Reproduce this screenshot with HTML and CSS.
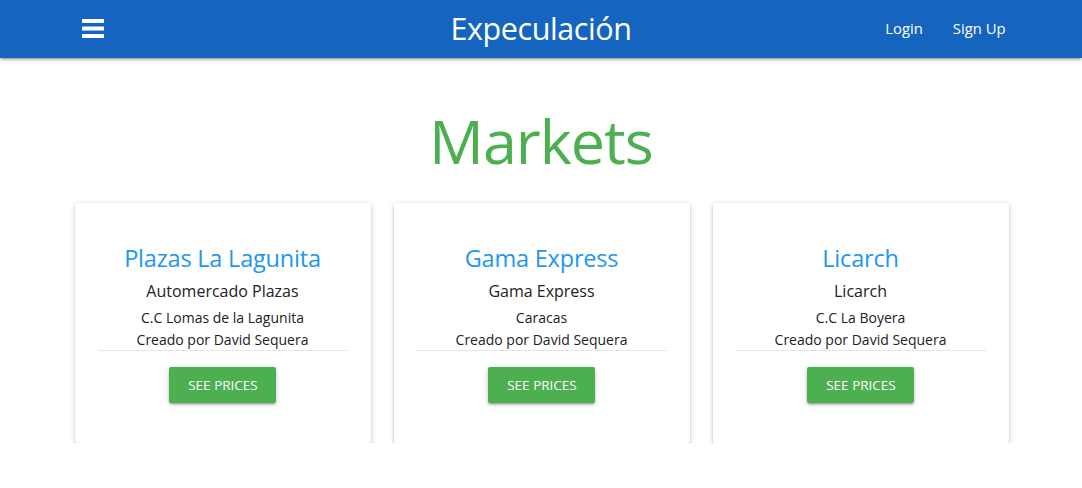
FILE: index.html
```html
<!DOCTYPE html>
<html lang="es">
<head>
<meta charset="utf-8">
<title>Expeculación</title>
<link rel="stylesheet" href="styles.css">
</head>
<body>
<nav class="navbar">
  <div class="nav-left">
    <svg class="menu-icon" width="22" height="19" viewBox="0 0 22 19" aria-hidden="true">
      <rect x="0" y="0" width="22" height="4" rx="0.6" fill="#fff"/>
      <rect x="0" y="7.5" width="22" height="4" rx="0.6" fill="#fff"/>
      <rect x="0" y="15" width="22" height="4" rx="0.6" fill="#fff"/>
    </svg>
  </div>
  <a class="brand" href="#">Expeculación</a>
  <ul class="nav-links">
    <li><a href="#">Login</a></li>
    <li><a href="#">Sign Up</a></li>
  </ul>
</nav>
<main class="page">
  <h1 class="page-title">Markets</h1>
  <div class="cards">
    <div class="card">
      <h2 class="card-title">Plazas La Lagunita</h2>
      <p class="card-sub">Automercado Plazas</p>
      <p class="card-line">C.C Lomas de la Lagunita</p>
      <p class="card-line">Creado por David Sequera</p>
      <div class="card-divider"></div>
      <a class="btn" href="#">See prices</a>
    </div>
    <div class="card">
      <h2 class="card-title">Gama Express</h2>
      <p class="card-sub">Gama Express</p>
      <p class="card-line">Caracas</p>
      <p class="card-line">Creado por David Sequera</p>
      <div class="card-divider"></div>
      <a class="btn" href="#">See prices</a>
    </div>
    <div class="card">
      <h2 class="card-title">Licarch</h2>
      <p class="card-sub">Licarch</p>
      <p class="card-line">C.C La Boyera</p>
      <p class="card-line">Creado por David Sequera</p>
      <div class="card-divider"></div>
      <a class="btn" href="#">See prices</a>
    </div>
  </div>
</main>
</body>
</html>
```
FILE: styles.css
```css
* { box-sizing: border-box; }
html, body { margin: 0; padding: 0; }
body {
  font-family: "Open Sans", "Noto Sans", "Liberation Sans", sans-serif;
  background: #fff;
  color: rgba(0,0,0,0.87);
}
a { text-decoration: none; color: inherit; }

.navbar {
  height: 58px;
  background: #1565c0;
  display: grid;
  grid-template-columns: 1fr auto 1fr;
  align-items: center;
  box-shadow: 0 2px 2px 0 rgba(0,0,0,0.14), 0 3px 1px -2px rgba(0,0,0,0.12), 0 1px 5px 0 rgba(0,0,0,0.2);
  position: relative;
  z-index: 1;
}
.nav-left {
  padding-left: 82px;
  display: flex;
  align-items: center;
}
.menu-icon { display: block; margin-top: -1px; }
.brand {
  color: #fff;
  font-size: 30.5px;
  line-height: 1;
  letter-spacing: -0.4px;
  margin-top: -2px;
}
.nav-links {
  list-style: none;
  margin: 0;
  padding: 0 62px 0 0;
  display: flex;
  justify-content: flex-end;
}
.nav-links a {
  display: block;
  color: #fff;
  font-size: 14.8px;
  padding: 0 14.5px;
  margin-top: -3px;
}
.nav-links li:first-child a { padding-right: 15.5px; }

.page { padding-top: 43px; }
.page-title {
  margin: 0;
  text-align: center;
  font-weight: 400;
  font-size: 61px;
  line-height: 80px;
  color: #4caf50;
  letter-spacing: -1px;
}
.cards {
  display: grid;
  grid-template-columns: repeat(3, 296px);
  gap: 23px;
  justify-content: center;
  margin-top: 22px;
  padding-left: 1px;
}
.card {
  height: 240px;
  background: #fff;
  border-radius: 2px;
  box-shadow: 0 2px 2px 0 rgba(0,0,0,0.14), 0 3px 1px -2px rgba(0,0,0,0.12), 0 1px 5px 0 rgba(0,0,0,0.2);
  display: flex;
  flex-direction: column;
  align-items: center;
  padding: 38px 23px 0;
  text-align: center;
}
.card-title {
  margin: 0;
  font-weight: 400;
  font-size: 23.5px;
  line-height: 34px;
  color: #2196f3;
  letter-spacing: -0.2px;
}
.card-sub {
  margin: 0;
  font-size: 16px;
  line-height: 32px;
  color: #222;
}
.card-line {
  margin: 0;
  font-size: 14px;
  line-height: 22px;
  color: #222;
}
.card-divider {
  align-self: stretch;
  height: 1px;
  background: #e6e6e6;
  margin-top: -1px;
}
.btn {
  margin-top: 16px;
  height: 36px;
  line-height: 36px;
  padding: 0 18px 0 19px;
  background: #4caf50;
  color: #fff;
  font-size: 13.5px;
  text-transform: uppercase;
  border-radius: 2px;
  letter-spacing: 0;
  box-shadow: 0 2px 2px 0 rgba(0,0,0,0.14), 0 3px 1px -2px rgba(0,0,0,0.12), 0 1px 5px 0 rgba(0,0,0,0.2);
}
```
